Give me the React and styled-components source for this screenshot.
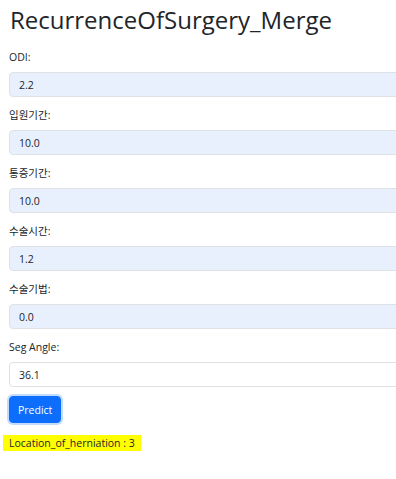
import React from "react";
import styled, { createGlobalStyle } from "styled-components";

const GlobalStyle = createGlobalStyle`
  body {
    margin: 0;
    background: #fff;
    color: #212529;
    font-family: "Open Sans", "Noto Sans CJK KR", sans-serif;
    overflow: hidden;
  }
`;

const Page = styled.div`
  padding: 5px 0 0 9px;
`;

const Title = styled.h1`
  margin: 0 0 13px 1px;
  font-size: 24px;
  font-weight: 400;
  line-height: 30px;
  color: #212529;
`;

const Form = styled.form`
  display: flex;
  flex-direction: column;
`;

const Field = styled.div`
  display: flex;
  flex-direction: column;
  gap: 6px;
  margin-bottom: 9px;
`;

const Label = styled.label`
  font-size: 10.5px;
  line-height: 18px;
  color: #212529;
`;

const Input = styled.input`
  box-sizing: border-box;
  width: 400px;
  height: 25px;
  padding: 0 9px;
  font-family: "Open Sans", sans-serif;
  font-size: 10.5px;
  color: #212529;
  background: ${(p) => (p.$filled ? "#e8f0fe" : "#fff")};
  border: 1px solid #dee2e6;
  border-radius: 4px;
  outline: none;
`;

const Button = styled.button`
  align-self: flex-start;
  margin: 0 0 0 0;
  height: 27px;
  padding: 0 8px;
  font-family: "Open Sans", sans-serif;
  font-size: 10.5px;
  color: #fff;
  background: #0d6efd;
  border: 1px solid #0d6efd;
  border-radius: 4px;
  box-shadow: 0 0 0 2px rgba(13, 110, 253, 0.25);
`;

const Result = styled.p`
  display: inline-block;
  margin: 12px 0 0 -6px;
  padding: 0 6px;
  font-size: 10.5px;
  line-height: 16px;
  color: #212529;
  background: #ffff00;
`;

const fields = [
  { label: "ODI:", value: "2.2", filled: true },
  { label: "입원기간:", value: "10.0", filled: true },
  { label: "통증기간:", value: "10.0", filled: true },
  { label: "수술시간:", value: "1.2", filled: true },
  { label: "수술기법:", value: "0.0", filled: true },
  { label: "Seg Angle:", value: "36.1", filled: false },
];

export default function App() {
  return (
    <>
      <GlobalStyle />
      <Page>
        <Title>RecurrenceOfSurgery_Merge</Title>
        <Form onSubmit={(e) => e.preventDefault()}>
          {fields.map((f) => (
            <Field key={f.label}>
              <Label>{f.label}</Label>
              <Input defaultValue={f.value} $filled={f.filled} />
            </Field>
          ))}
          <Button type="submit">Predict</Button>
        </Form>
        <Result>Location_of_herniation : 3</Result>
      </Page>
    </>
  );
}
